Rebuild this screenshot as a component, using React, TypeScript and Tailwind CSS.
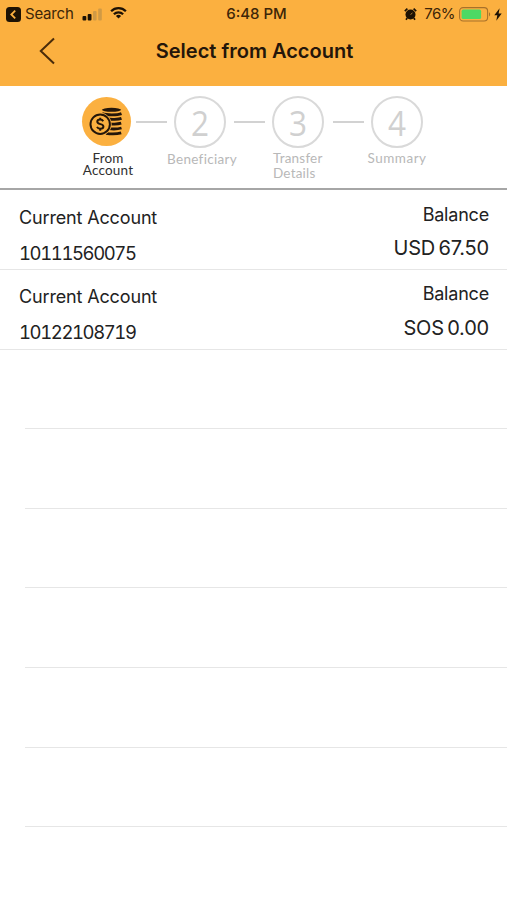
import type { ReactNode } from "react";

interface Account {
  type: string;
  number: string;
  balance: string;
}

const accounts: Account[] = [
  { type: "Current Account", number: "10111560075", balance: "USD 67.50" },
  { type: "Current Account", number: "10122108719", balance: "SOS 0.00" },
];

// Empty table rows under the accounts
const emptyRows = [1, 2, 3, 4, 5, 6];

function StatusBar() {
  return (
    <div className="flex h-7 items-center justify-between pl-[6px] pr-[5px] text-[15px] text-[#3d2608]">
      <div className="flex w-[180px] items-center">
        <svg width="15" height="15" viewBox="0 0 15 15">
          <rect width="15" height="15" rx="3.5" fill="#1d1204" />
          <path d="M9.2 3.7 5.3 7.5l3.9 3.8" fill="none" stroke="#fbb040" strokeWidth="1.8" />
        </svg>
        <span className="ml-[4px] w-[48px] whitespace-nowrap tracking-[-0.2px]">Search</span>
        <svg className="ml-[9px]" width="20" height="13" viewBox="0 0 20 13">
          <rect x="0.5" y="8" width="3.8" height="4.5" rx="1" fill="#1d1204" />
          <rect x="5.7" y="6" width="3.8" height="6.5" rx="1" fill="#1d1204" />
          <rect x="11" y="3" width="3.6" height="9.5" rx="1" fill="#d09a45" />
          <rect x="16.2" y="0.5" width="3.6" height="12" rx="1" fill="#d09a45" />
        </svg>
        <svg className="-mt-[2px] ml-[8px]" width="17" height="12" viewBox="0 0 18 13">
          <g fill="none" stroke="#1d1204" strokeWidth="2.4">
            <path d="M1 4.6a11.3 11.3 0 0 1 16 0" />
            <path d="M4 7.8a7.1 7.1 0 0 1 10 0" />
          </g>
          <path d="M9 12.4 6.2 9.7a4 4 0 0 1 5.6 0z" fill="#1d1204" />
        </svg>
      </div>

      <span className="whitespace-nowrap pl-[5px] font-medium">6:48 PM</span>

      <div className="flex w-[180px] items-center justify-end">
        <svg width="13" height="13" viewBox="0 0 13 13">
          <circle cx="6.5" cy="6.5" r="5" fill="#1d1204" />
          <path d="M0.8 3.1 3.4 0.7M12.2 3.1 9.6 0.7M3.2 10.1 2 11.7M9.8 10.1 11 11.7" stroke="#1d1204" strokeWidth="1.7" />
          <path d="M6.6 6.8 8.4 4.7" stroke="#b98234" strokeWidth="0.9" />
        </svg>
        <span className="ml-[7px] whitespace-nowrap tracking-[-0.5px]">76%</span>
        <svg className="ml-[4px]" width="32" height="15" viewBox="0 0 32 15">
          <rect x="0.6" y="0.6" width="28" height="13.4" rx="3.5" fill="none" stroke="#a8712a" strokeWidth="1.1" />
          <rect x="2.6" y="2.6" width="19.5" height="9.4" rx="1.6" fill="#4cd964" />
          <path d="M30 5.2v4.2c1.6-.6 1.6-3.6 0-4.2z" fill="#a8712a" />
        </svg>
        <svg className="ml-[3px]" width="8" height="13" viewBox="0 0 8 13">
          <path d="M5.6 0.3 0.3 7.3h3L2.3 12.7 7.7 5.4H4.6z" fill="#1d1204" />
        </svg>
      </div>
    </div>
  );
}

function CoinsIcon() {
  return (
    <svg width="34" height="30" viewBox="0 0 34 30">
      <g fill="none" stroke="#24160a" strokeWidth="2.8">
        <ellipse cx="22.5" cy="2.8" rx="9.6" ry="2" fill="#24160a" stroke="none" />
        <path d="M13.2 6.6c4 1.7 15 1.7 19.3 0" />
        <path d="M18 11.9c4 .8 11.5.6 14.5-.5" />
        <path d="M21 16.8c3.5.4 8.500.2 11.2-.6" />
        <path d="M20 21.7c4 .5 9.500.2 12.5-.7" />
        <path d="M17 26.3c5 .7 12 .4 15.2-.5" />
      </g>
      <circle cx="11.2" cy="17.2" r="11.4" fill="#fbb040" />
      <circle cx="11.2" cy="17.2" r="9.7" fill="#fbb040" stroke="#24160a" strokeWidth="2" />
      <path
        d="M14.2 14.2c-.6-1.1-1.6-1.6-3-1.6-1.7 0-2.9.8-2.9 2.2 0 3.2 6.1 1.5 6.1 4.6 0 1.5-1.3 2.3-3.2 2.3-1.5 0-2.6-.6-3.2-1.8M11.2 10.7v2M11.2 21.7v2"
        fill="none"
        stroke="#24160a"
        strokeWidth="2"
      />
    </svg>
  );
}

function StepLine() {
  return <div className="mt-[25px] h-[2px] w-[31px] shrink-0 bg-[#d2d2d2]" />;
}

function StepCircle({ children }: { children: ReactNode }) {
  return (
    <div className="flex h-[52px] w-[52px] shrink-0 items-center justify-center rounded-full border-2 border-[#d9d9d9] pt-px font-['Open_Sans',sans-serif] text-[35px] leading-none text-[#d0d0d0]">
      <span className="scale-x-90">{children}</span>
    </div>
  );
}

function Stepper() {
  return (
    <div className="flex h-[104px] items-start border-b-2 border-[#a6a6a6] pl-[80px] pt-[10px] font-['Lato',sans-serif] text-[13.5px] text-[#b8b8b8]">
      <div className="flex w-[52px] flex-col items-center">
        <div className="mt-px flex h-[49px] w-[49px] items-center justify-center rounded-full bg-[#fbb040]">
          <CoinsIcon />
        </div>
        <div className="ml-[4px] mt-[6px] whitespace-nowrap text-center leading-[12px] tracking-[0.2px] text-[#303030]">
          From
          <br />
          Account
        </div>
      </div>
      <div className="ml-[4px]">
        <StepLine />
      </div>
      <div className="ml-[7px] flex w-[52px] flex-col items-center">
        <StepCircle>2</StepCircle>
        <div className="ml-[4px] mt-[4px] whitespace-nowrap leading-[15px] tracking-[0.3px]">Beneficiary</div>
      </div>
      <div className="ml-[8px]">
        <StepLine />
      </div>
      <div className="ml-[7px] flex w-[52px] flex-col items-start">
        <StepCircle>3</StepCircle>
        <div className="ml-[1px] mt-[3px] whitespace-nowrap leading-[15px] tracking-[0.2px]">
          Transfer
          <br />
          Details
        </div>
      </div>
      <div className="ml-[9px]">
        <StepLine />
      </div>
      <div className="ml-[7px] flex w-[52px] flex-col items-center">
        <StepCircle>4</StepCircle>
        <div className="mt-[3px] whitespace-nowrap leading-[15px] tracking-[0.5px]">Summary</div>
      </div>
    </div>
  );
}

function AccountRow({ account }: { account: Account }) {
  return (
    <div className="flex h-[79.6px] justify-between border-b border-[#e6e6e6] pl-[19px] pr-[18px] text-[#222]">
      <div className="pt-[15px]">
        <div className="text-[18px] leading-[24px] tracking-[-0.15px]">{account.type}</div>
        <div className="mt-[11px] text-[18.5px] leading-[24px] tracking-[-1.4px] tabular-nums">{account.number}</div>
      </div>
      <div className="pt-[12px] text-right">
        <div className="text-[18px] leading-[24px] tracking-[-0.2px]">Balance</div>
        <div className="mt-[8.5px] text-[20px] leading-[26px] tracking-[-0.2px] [word-spacing:-2px]">{account.balance}</div>
      </div>
    </div>
  );
}

export default function App() {
  return (
    <div className="h-[900px] w-[507px] overflow-hidden bg-white font-['Inter',sans-serif]">
      <header className="h-[86px] bg-[#fbb040]">
        <StatusBar />
        <div className="flex h-[46px] items-center pl-[39px] pr-[55px]">
          <svg width="16" height="28" viewBox="0 0 16 28">
            <path d="M15 1.5 1.8 14 15 26.5" fill="none" stroke="#4a2c0a" strokeWidth="2" />
          </svg>
          <h1 className="flex-1 whitespace-nowrap pl-[2px] text-center text-[20px] font-semibold text-[#24160a]">Select from Account</h1>
        </div>
      </header>

      <Stepper />

      <div className="pt-[0.5px]">
        {accounts.map((account) => (
          <AccountRow key={account.number} account={account} />
        ))}
        {emptyRows.map((row) => (
          <div key={row} className="ml-[25px] h-[79.6px] border-b border-[#e6e6e6]" />
        ))}
      </div>
    </div>
  );
}
